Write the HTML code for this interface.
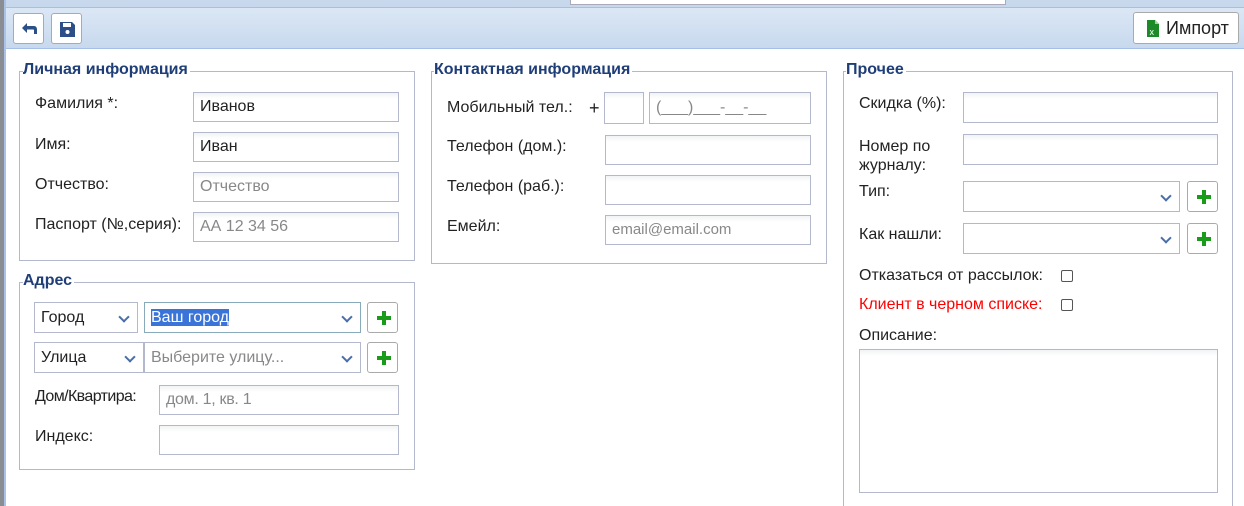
<!DOCTYPE html>
<html><head><meta charset="utf-8"><style>
*{box-sizing:border-box;margin:0;padding:0}
html,body{width:1244px;height:506px;overflow:hidden}
body{background:#fff;font-family:"Liberation Sans",sans-serif;font-size:16px;color:#222;position:relative}
.a{position:absolute}
.strip{left:0;top:0;width:6px;height:506px;background:#8a8d92;border-right:2px solid #a9c2e6}
.top{left:6px;top:0;width:1238px;height:7px;background:#c7d7ec}
.tab{left:570px;top:0;width:436px;height:5px;background:#fff;border:1px solid #aab;border-top:none}
.tb{left:6px;top:7px;width:1238px;height:42px;background:linear-gradient(#dbe7f5,#c8d9ee);border-bottom:1px solid #a5c0e6;border-top:1px solid #a5c0e6}
.btn{background:#fff;border:1px solid #aaa;border-radius:3px}
fieldset{position:absolute;border:1px solid #b4b8cc}
.lg{position:absolute;font-weight:bold;color:#1f3e78;font-size:16px;background:#fff;padding-right:2px}
.in{position:absolute;border:1px solid #b4b8cc;background:linear-gradient(#f1f3f4,#fff 6px);height:30px;padding:0 6px;line-height:28px;font-size:16px}
.ph{color:#888}
.lb{position:absolute;font-size:16px}
.sel{position:absolute;border:1px solid #b4b8cc;background:#fff;height:31px;padding:0 6px;line-height:29px;font-size:16px}
.sel:after{content:"";position:absolute;right:9px;top:10px;width:6px;height:6px;border-right:2px solid #4a6ea8;border-bottom:2px solid #4a6ea8;transform:rotate(45deg)}
.plus{position:absolute;width:31px;height:31px;border:1px solid #aaa;border-radius:3px;background:#fff}
.plus:before{content:"";position:absolute;left:14px;top:8px;width:4px;height:14px;background:#1a9b1a}
.plus:after{content:"";position:absolute;left:9px;top:13px;width:14px;height:4px;background:#1a9b1a}
.cb{position:absolute;width:12px;height:12px;border:1px solid #555;border-radius:2px}
</style></head><body>
<div class="a strip"></div>
<div class="a top"></div>
<div class="a tab"></div>
<div class="a tb"></div>
<div class="a btn" style="left:13px;top:13px;width:31px;height:31px"><svg width="31" height="31" viewBox="0 0 31 31"><path d="M8 14 L13 9 L13 12 L20 12 Q23 12 23 16 L23 20 L20 20 L20 16 Q20 15.5 19 15.5 L13 15.5 L13 19 Z" fill="#2b4f86"/></svg></div>
<div class="a btn" style="left:51px;top:13px;width:31px;height:31px"><svg width="31" height="31" viewBox="0 0 31 31"><path d="M8 8 H20 L23 11 V23 H8 Z" fill="#2b4f86"/><rect x="11" y="9" width="8" height="4" fill="#fff"/><circle cx="15.5" cy="18" r="2" fill="#fff"/></svg></div>
<div class="a btn" style="left:1133px;top:12px;width:106px;height:32px;font-size:18px;line-height:30px;padding-left:32px;color:#222">Импорт
<svg class="a" style="left:13px;top:7px" width="12" height="17" viewBox="0 0 12 17"><path d="M0 0 H8 L12 4 V17 H0 Z" fill="#1d8a2a"/><path d="M8 0 V4 H12" fill="#9fd49f"/><text x="2.5" y="15" font-size="9" fill="#fff" font-family="Liberation Sans">x</text></svg></div>

<fieldset style="left:19px;top:71px;width:396px;height:190px"></fieldset>
<div class="lg" style="left:23px;top:61px">Личная информация</div>
<div class="lb" style="left:35px;top:95px">Фамилия *:</div>
<div class="in" style="left:193px;top:92px;width:206px">Иванов</div>
<div class="lb" style="left:35px;top:136px">Имя:</div>
<div class="in" style="left:193px;top:132px;width:206px">Иван</div>
<div class="lb" style="left:35px;top:176px">Отчество:</div>
<div class="in ph" style="left:193px;top:172px;width:206px">Отчество</div>
<div class="lb" style="left:35px;top:216px">Паспорт (№,серия):</div>
<div class="in ph" style="left:193px;top:212px;width:206px">АА 12 34 56</div>

<fieldset style="left:19px;top:282px;width:396px;height:188px"></fieldset>
<div class="lg" style="left:23px;top:272px">Адрес</div>
<div class="sel" style="left:34px;top:302px;width:104px">Город</div>
<div class="sel" style="left:144px;top:302px;width:217px;border-color:#8ab"><span style="background:#3a74d8;color:#fff">Ваш город</span><div class="a" style="right:0;top:0;width:24px;height:29px;background:#d8ebfa;z-index:-1"></div></div>
<div class="plus" style="left:367px;top:302px"></div>
<div class="sel" style="left:34px;top:342px;width:110px">Улица</div>
<div class="sel ph" style="left:144px;top:342px;width:217px">Выберите улицу...</div>
<div class="plus" style="left:367px;top:342px"></div>
<div class="lb" style="left:35px;top:388px;letter-spacing:-0.6px">Дом/Квартира:</div>
<div class="in ph" style="left:159px;top:385px;width:240px;letter-spacing:-0.3px">дом. 1, кв. 1</div>
<div class="lb" style="left:35px;top:428px">Индекс:</div>
<div class="in" style="left:159px;top:425px;width:240px"></div>

<fieldset style="left:431px;top:71px;width:396px;height:193px"></fieldset>
<div class="lg" style="left:434px;top:61px">Контактная информация</div>
<div class="lb" style="left:447px;top:99px">Мобильный тел.:</div>
<div class="lb" style="left:589px;top:98px;font-size:18px">+</div>
<div class="in" style="left:604px;top:92px;width:40px;height:32px"></div>
<div class="in ph" style="left:649px;top:92px;width:162px;height:32px;line-height:30px">(___)___-__-__</div>
<div class="lb" style="left:447px;top:138px">Телефон (дом.):</div>
<div class="in" style="left:605px;top:135px;width:206px"></div>
<div class="lb" style="left:447px;top:178px">Телефон (раб.):</div>
<div class="in" style="left:605px;top:175px;width:206px"></div>
<div class="lb" style="left:447px;top:218px">Емейл:</div>
<div class="in ph" style="left:605px;top:215px;width:206px;font-size:15px">email@email.com</div>

<fieldset style="left:843px;top:71px;width:390px;height:440px"></fieldset>
<div class="lg" style="left:846px;top:61px">Прочее</div>
<div class="lb" style="left:859px;top:95px">Скидка (%):</div>
<div class="in" style="left:963px;top:92px;width:255px;height:31px"></div>
<div class="lb" style="left:859px;top:137px;line-height:19px">Номер по<br>журналу:</div>
<div class="in" style="left:963px;top:134px;width:255px;height:31px"></div>
<div class="lb" style="left:859px;top:183px">Тип:</div>
<div class="sel" style="left:963px;top:181px;width:217px"></div>
<div class="plus" style="left:1187px;top:181px"></div>
<div class="lb" style="left:859px;top:226px">Как нашли:</div>
<div class="sel" style="left:963px;top:223px;width:217px"></div>
<div class="plus" style="left:1187px;top:223px"></div>
<div class="lb" style="left:859px;top:267px">Отказаться от рассылок:</div>
<div class="cb" style="left:1061px;top:270px"></div>
<div class="lb" style="left:859px;top:296px;color:#f00">Клиент в черном списке:</div>
<div class="cb" style="left:1061px;top:299px"></div>
<div class="lb" style="left:859px;top:327px">Описание:</div>
<div class="in" style="left:859px;top:349px;width:359px;height:144px"></div>
</body></html>
